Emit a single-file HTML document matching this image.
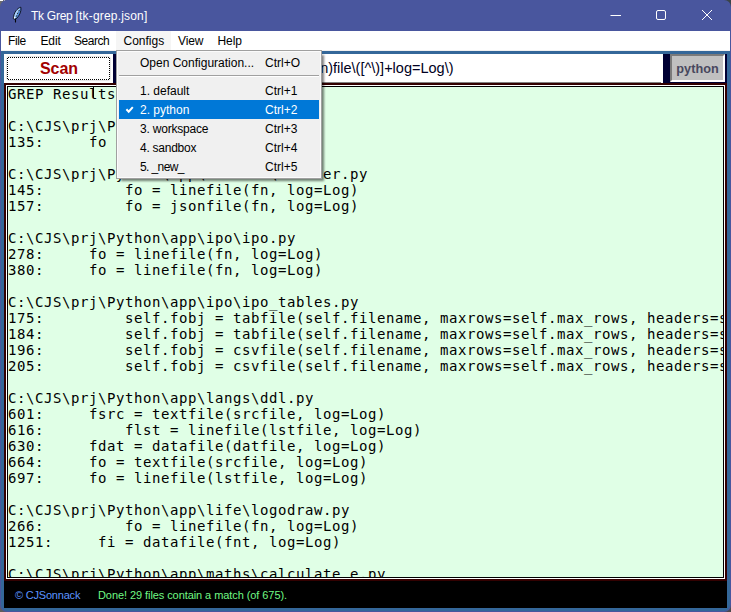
<!DOCTYPE html>
<html><head><meta charset="utf-8"><title>Tk Grep</title>
<style>
html,body{margin:0;padding:0;}
body{width:731px;height:612px;overflow:hidden;background:#6b6b6b;position:relative;font-family:"Liberation Sans",sans-serif;}
.abs{position:absolute;}
#win{left:0;top:0;width:731px;height:612px;background:#49569e;border-radius:7px;overflow:hidden;}
#title{left:31px;top:8px;height:16px;line-height:16px;font-size:12px;color:#fff;white-space:nowrap;}
#menubar{left:1px;top:31px;width:729px;height:20px;background:#fff;border-bottom:1px solid #f0f0f0;box-sizing:border-box;}
.mi{position:absolute;top:0;height:19px;line-height:20px;font-size:12px;color:#000;white-space:nowrap;}
#body{left:1px;top:51px;width:729px;height:560px;background:#346799;border-radius:0 0 6px 6px;}
#toolbar{left:4px;top:54px;width:723px;height:29px;background:#000033;}
#scan{left:0;top:0;width:109px;height:29px;background:#fdfdfd;}
#scan .g{position:absolute;left:2px;top:2px;right:2px;bottom:2px;border:1px solid #e6e6e6;border-radius:3px;background:#fff;}
#scan .d{position:absolute;}
#scan .dh{left:4px;width:101px;height:1px;background:repeating-linear-gradient(90deg,#000 0,#000 1px,transparent 1px,transparent 2px);}
#scan .dv{top:4px;height:21px;width:1px;background:repeating-linear-gradient(180deg,#000 0,#000 1px,transparent 1px,transparent 2px);}
#scan .lbl{position:absolute;left:1px;right:0;top:1px;height:27px;line-height:27px;text-align:center;font-weight:bold;font-size:16px;color:#a20000;}
#entry{left:112px;top:0;width:547px;height:29px;background:linear-gradient(90deg,#808080 0,#808080 545.5px,#fff 545.5px) bottom/100% 1px no-repeat #fff;overflow:hidden;}
#entry span{position:absolute;right:209.5px;top:0;height:28px;line-height:29px;font-size:14.5px;color:#000022;white-space:nowrap;}
#cfg{left:666px;top:0;width:55px;height:28px;box-sizing:border-box;background:#c0c0c0;border:2px solid;border-color:#7a7a7a #fff #fff #7a7a7a;text-align:center;font-weight:bold;font-size:12.7px;line-height:26px;color:#48485e;}
#tframe{left:4px;top:83px;width:723px;height:498px;box-sizing:border-box;background:#330000;}
#tw{left:2px;top:2px;width:719px;height:494px;box-sizing:border-box;border:1px solid #fff;background:#000;}
#tx{left:1px;top:1px;width:715px;height:490px;background:#e0ffe6;overflow:hidden;}
#tx pre{margin:0;position:absolute;left:0px;top:-1px;font-family:"DejaVu Sans Mono","Liberation Mono",monospace;font-size:14px;letter-spacing:0.57px;line-height:16px;color:#000;}
#status{left:4px;top:581px;width:723px;height:27px;background:#000;}
#status span{position:absolute;top:1px;height:27px;line-height:27px;font-size:11px;white-space:nowrap;}
#ddsh{left:121px;top:55px;width:202.5px;height:125.5px;background:rgba(0,0,0,0.5);filter:blur(1px);}
#dd{left:116px;top:50px;width:206px;height:129px;box-sizing:border-box;background:#f0f0f0;border:1px solid #a0a0a0;box-shadow:inset 0 0 0 1px #fbfbfb;}
.di{position:absolute;left:2px;width:200px;height:19px;line-height:19px;font-size:12px;color:#000;white-space:nowrap;}
.di .l{position:absolute;left:21px;top:1px;}
.di .a{position:absolute;left:146px;top:1px;}
.di.sel{background:#0078d7;color:#fff;}
#sep{left:2px;top:24px;width:200px;height:1px;background:#a0a0a0;border-bottom:1px solid #fff;}
</style></head><body>
<div class="abs" style="left:0;top:0;width:3px;height:1px;background:#fff"></div><div class="abs" style="left:4px;top:0;width:1.3px;height:1px;background:#e8e8f4"></div><div class="abs" style="left:719px;top:0;width:12px;height:12px;background:#3a4448"></div><div class="abs" style="left:719px;top:600px;width:12px;height:12px;background:#4a4a4e"></div><div class="abs" style="left:0;top:600px;width:12px;height:12px;background:#5e5e5e"></div>
<div id="win" class="abs">
 <svg class="abs" style="left:11px;top:6px" width="12" height="18" viewBox="11 6 12 18">
  <path d="M20.8 7.2 C17.4 8.2 13.8 12 13.3 18.7 L15.5 19.5 Z" fill="#a6d0fb"/>
  <path d="M20.8 7.2 C21.6 11.5 19.2 16.2 15.5 19.5 Z" fill="#4a8de0"/>
  <path d="M20.8 7.2 C17.4 8.2 13.8 12 13.3 18.7 L15.5 19.5 C19.2 16.2 21.6 11.5 20.8 7.2 Z" fill="none" stroke="#05060c" stroke-width="0.85" stroke-linejoin="round"/>
  <path d="M19.3 10 C17.8 12.6 16.5 15.2 15.5 19" fill="none" stroke="#05060c" stroke-width="0.8" stroke-dasharray="1.6 1.4"/>
  <path d="M15.5 18.8 L15.5 22.4" fill="none" stroke="#05060c" stroke-width="1.1"/>
  <rect x="13.9" y="17" width="1.1" height="1.3" fill="#fff"/>
 </svg>
 <div id="title" class="abs"><span style="letter-spacing:-0.27px">Tk Grep </span><span style="letter-spacing:0.18px">[tk-grep.json]</span></div>
 <svg class="abs" style="left:600px;top:0" width="131" height="31" viewBox="0 0 131 31">
  <path d="M10.5 15.5 H21" stroke="#fff" stroke-width="1" fill="none"/>
  <rect x="56.5" y="10.5" width="9" height="9" rx="1.5" fill="none" stroke="#fff" stroke-width="1"/>
  <path d="M102 10 L112 20 M112 10 L102 20" stroke="#fff" stroke-width="1" fill="none"/>
 </svg>
 <div id="menubar" class="abs">
  <div class="mi" style="left:115px;width:55px;background:#f5f5f5;height:19px"></div>
  <div class="mi" style="left:7px;letter-spacing:-0.35px">File</div>
  <div class="mi" style="left:39.5px;letter-spacing:-0.15px">Edit</div>
  <div class="mi" style="left:73px;letter-spacing:-0.45px">Search</div>
  <div class="mi" style="left:122.5px">Configs</div>
  <div class="mi" style="left:177px;letter-spacing:-0.1px">View</div>
  <div class="mi" style="left:216.5px;letter-spacing:-0.1px">Help</div>
 </div>
 <div id="body" class="abs"></div>
 <div id="toolbar" class="abs">
  <div id="scan" class="abs"><div class="g"></div><div class="d dh" style="top:3px"></div><div class="d dh" style="top:25px"></div><div class="d dv" style="left:3px"></div><div class="d dv" style="left:105px"></div><div class="lbl">Scan</div></div>
  <div id="entry" class="abs"><span>\b(line|json|tab|csv|text|data|bin)file\([^\)]+log=Log\)</span></div>
  <div id="cfg" class="abs">python</div>
 </div>
 <div id="tframe" class="abs"><div id="tw" class="abs"><div id="tx" class="abs"><pre>GREP Results

C:\CJS\prj\Python\app\grep\grep.py
135:     fo = tabfile(fn, log=Log)

C:\CJS\prj\Python\app\modules\builder.py
145:         fo = linefile(fn, log=Log)
157:         fo = jsonfile(fn, log=Log)

C:\CJS\prj\Python\app\ipo\ipo.py
278:     fo = linefile(fn, log=Log)
380:     fo = linefile(fn, log=Log)

C:\CJS\prj\Python\app\ipo\ipo_tables.py
175:         self.fobj = tabfile(self.filename, maxrows=self.max_rows, headers=self.headers, log=Log)
184:         self.fobj = tabfile(self.filename, maxrows=self.max_rows, headers=self.headers, log=Log)
196:         self.fobj = csvfile(self.filename, maxrows=self.max_rows, headers=self.headers, log=Log)
205:         self.fobj = csvfile(self.filename, maxrows=self.max_rows, headers=self.headers, log=Log)

C:\CJS\prj\Python\app\langs\ddl.py
601:     fsrc = textfile(srcfile, log=Log)
616:         flst = linefile(lstfile, log=Log)
630:     fdat = datafile(datfile, log=Log)
664:     fo = textfile(srcfile, log=Log)
697:     fo = linefile(lstfile, log=Log)

C:\CJS\prj\Python\app\life\logodraw.py
266:         fo = linefile(fn, log=Log)
1251:     fi = datafile(fnt, log=Log)

C:\CJS\prj\Python\app\maths\calculate_e.py
</pre><div class="abs" style="left:85px;top:0;width:1px;height:11px;background:#000"></div></div></div></div>
 <div id="status" class="abs"><span style="left:11px;color:#5c94ff;letter-spacing:-0.2px">© CJSonnack</span><span style="left:94px;color:#70f884;letter-spacing:-0.075px">Done! 29 files contain a match (of 675).</span></div>
 <div id="ddsh" class="abs"></div>
 <div id="dd" class="abs">
  <div class="di" style="top:2px"><span class="l">Open Configuration...</span><span class="a">Ctrl+O</span></div>
  <div id="sep" class="abs"></div>
  <div class="di" style="top:30px"><span class="l">1. default</span><span class="a">Ctrl+1</span></div>
  <div class="di sel" style="top:49px"><svg style="position:absolute;left:6px;top:5px" width="10" height="9" viewBox="0 0 10 9"><path d="M1.4 4.3 L3.7 6.7 L7.8 2.2" fill="none" stroke="#fff" stroke-width="2"/></svg><span class="l">2. python</span><span class="a">Ctrl+2</span></div>
  <div class="di" style="top:68px"><span class="l" style="letter-spacing:-0.2px">3. workspace</span><span class="a">Ctrl+3</span></div>
  <div class="di" style="top:87px"><span class="l" style="letter-spacing:-0.25px">4. sandbox</span><span class="a">Ctrl+4</span></div>
  <div class="di" style="top:106px"><span class="l" style="letter-spacing:-0.6px">5. _new_</span><span class="a">Ctrl+5</span></div>
 </div>
</div>
</body></html>
